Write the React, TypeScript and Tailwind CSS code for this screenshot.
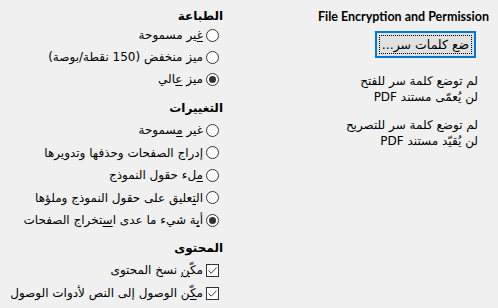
import type { ReactNode } from "react";

const arabic = "font-['DejaVu_Sans','Noto_Sans',sans-serif]";

function Radio({ checked, children }: { checked?: boolean; children: ReactNode }) {
  return (
    <div className="flex items-center gap-[3px] pr-[4px]">
      <span className="flex h-[13px] w-[13px] shrink-0 items-center justify-center rounded-full border border-[#333] bg-white">
        {checked && <span className="h-[7px] w-[7px] rounded-full bg-[#333]" />}
      </span>
      <span className="whitespace-nowrap">{children}</span>
    </div>
  );
}

function Check({ children }: { children: ReactNode }) {
  return (
    <div className="flex items-center gap-[3px] pr-[4px]">
      <span className="flex h-[13px] w-[13px] shrink-0 items-center justify-center border border-[#333] bg-white">
        <svg width="11" height="11" viewBox="0 0 11 11" fill="none">
          <path d="M1.5 5.5 L4.2 8.2 L9.6 2.6" stroke="#333" strokeWidth="1" />
        </svg>
      </span>
      <span className="whitespace-nowrap">{children}</span>
    </div>
  );
}

const U = ({ children }: { children: ReactNode }) => <span className="underline underline-offset-2">{children}</span>;

export default function App() {
  return (
    <div
      dir="rtl"
      className={`flex h-[308px] w-[498px] overflow-hidden bg-[#f0f0f0] text-[12px] leading-[16px] text-black ${arabic}`}
    >
      {/* encryption column */}
      <div className="flex w-[250px] shrink-0 flex-col pr-[9px] pt-[9px]">
        <div dir="ltr" className="h-[16px] text-right font-['Lato',sans-serif] text-[12.5px] leading-[16px] font-bold">
          File Encryption and Permission
        </div>
        <div className="mt-[6px] pr-[13px]">
          <button className="flex h-[27px] w-[101px] items-center justify-center border-2 border-[#0078d7] bg-[#e1e1e1] p-[2px]">
            <span className="flex h-full w-full items-center justify-center border border-dotted border-black text-[12.5px]">
              ضع كلمات سر...
            </span>
          </button>
        </div>
        <div className="mt-[15px] pr-[11px]">
          <div>لم توضع كلمة سر للفتح</div>
          <div>لن يُعمّى مستند PDF</div>
        </div>
        <div className="mt-[12px] pr-[11px]">
          <div>لم توضع كلمة سر للتصريح</div>
          <div>لن يُقيّد مستند PDF</div>
        </div>
      </div>

      {/* permissions column */}
      <div className="flex flex-col pr-[25px] pt-[8px]">
        <div className="font-bold">الطباعة</div>
        <div className="flex flex-col [&>div]:h-[22px]">
          <Radio><U>غ</U>ير مسموحة</Radio>
          <Radio>ميز منخفض (150 نقطة/بوصة)</Radio>
          <Radio checked>ميز <U>ع</U>الي</Radio>
        </div>

        <div className="mt-[10px] font-bold">التغييرات</div>
        <div className="mt-[3px] flex flex-col [&>div]:h-[22.5px]">
          <Radio>غير <U>م</U>سموحة</Radio>
          <Radio><U>إ</U>دراج الصفحات وحذفها وتدويرها</Radio>
          <Radio><U>م</U>لء حقول النموذج</Radio>
          <Radio>ال<U>ت</U>عليق على حقول النموذج وملؤها</Radio>
          <Radio checked>أ<U>ي</U>ة شيء ما عدى ا<U>س</U>تخراج الصفحات</Radio>
        </div>

        <div className="mt-[8px] font-bold">المحتوى</div>
        <div className="mt-[3px] flex flex-col [&>div]:h-[23px]">
          <Check>مكّ<U>ن</U> نسخ المحتوى</Check>
          <Check>م<U>ك</U>ّن الوصول إلى النص لأدوات الوصول</Check>
        </div>
      </div>
    </div>
  );
}
